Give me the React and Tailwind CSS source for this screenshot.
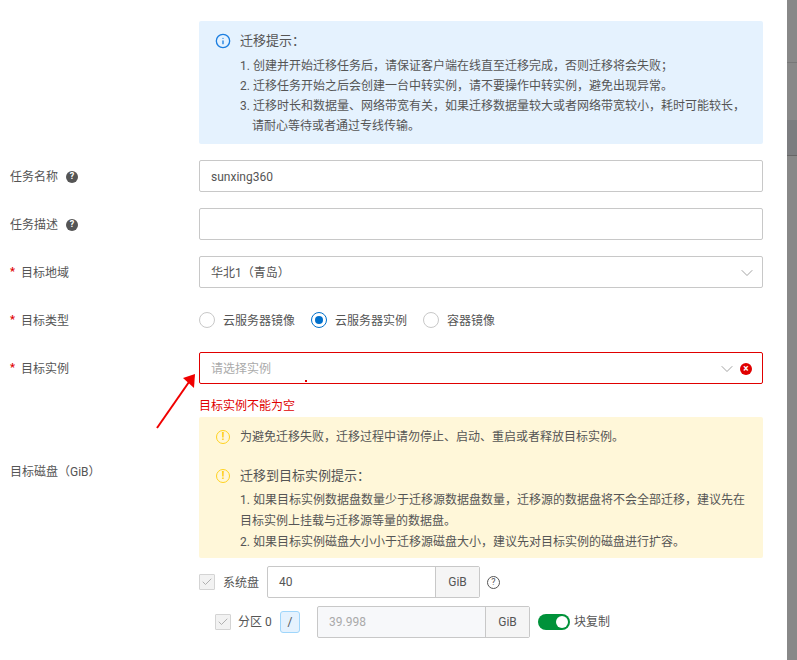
import React from "react";
import { ChevronDown, Check, Info } from "lucide-react";

const fontStack = "font-['Roboto','Noto_Sans_CJK_SC',sans-serif]";

const HelpDot = () => (
  <span className="ml-[8px] flex h-[12px] w-[12px] items-center justify-center rounded-full bg-[#555] text-[9px] font-bold leading-none text-white">
    ?
  </span>
);

const Label = ({ required, help, children }) => (
  <div className="flex h-[32px] w-[199px] shrink-0 items-center pl-[10px] pt-px text-[12px] text-[#555]">
    {required && <span className="mr-[6px] text-[11px] font-bold text-[#e00000]">*</span>}
    <span>{children}</span>
    {help && <HelpDot />}
  </div>
);

const Radio = ({ checked, children }) => (
  <div className="flex items-center">
    <span
      className={`flex h-[16px] w-[16px] items-center justify-center rounded-full border bg-white ${checked ? "border-[#0070cc]" : "border-[#c8c8c8]"}`}
    >
      {checked && <span className="h-[8px] w-[8px] rounded-full bg-[#0070cc]" />}
    </span>
    <span className="ml-[8px] pt-px text-[12px] text-[#555]">{children}</span>
  </div>
);

const AlertIcon = () => (
  <span className="flex h-[14px] w-[14px] shrink-0 items-center justify-center rounded-full border-[1.5px] border-[#ffd21e] text-[10px] font-bold leading-none text-[#ffc800]">
    !
  </span>
);

const CheckBox = () => (
  <span className="flex h-[16px] w-[16px] shrink-0 items-center justify-center rounded-[1px] border border-[#d4d4d4] bg-[#f2f2f2]">
    <Check size={12} strokeWidth={2} className="text-[#b0b0b0]" />
  </span>
);

const GibInput = ({ value, disabled }) => (
  <div
    className={`flex h-[32px] w-[213px] rounded-[2px] border border-[#c8c8c8] text-[12px] ${disabled ? "bg-[#f7f8fa] text-[#aaa]" : "bg-white text-[#555]"}`}
  >
    <div className="flex flex-1 items-center pl-[11px]">{value}</div>
    <div className="flex w-[44px] items-center justify-center border-l border-[#c8c8c8] bg-[#f5f5f5] text-[#555]">
      GiB
    </div>
  </div>
);

export default function App() {
  return (
    <div className={`relative flex h-[660px] w-[797px] overflow-hidden bg-white ${fontStack}`}>
      <div className="flex min-w-0 flex-1 flex-col pr-[24px] pt-[21px]">
        <div className="ml-[199px] h-[123px] rounded-[2px] bg-[#e5f2fe] pl-[16px] pt-[11px]">
          <div className="flex h-[17px] items-center text-[13px] text-[#555]">
            <Info size={16} strokeWidth={2} className="mr-[9px] text-[#1b7ee0]" />
            迁移提示：
          </div>
          <ol className="ml-[25px] mt-[7px] text-[12px] leading-[20px] text-[#555]">
            <li>1. 创建并开始迁移任务后，请保证客户端在线直至迁移完成，否则迁移将会失败；</li>
            <li>2. 迁移任务开始之后会创建一台中转实例，请不要操作中转实例，避免出现异常。</li>
            <li>3. 迁移时长和数据量、网络带宽有关，如果迁移数据量较大或者网络带宽较小，耗时可能较长，</li>
            <li className="pl-[12px]">请耐心等待或者通过专线传输。</li>
          </ol>
        </div>

        <div className="mt-[16px] flex">
          <Label help>任务名称</Label>
          <div className="flex h-[32px] flex-1 items-center rounded-[2px] border border-[#c8c8c8] pl-[11px] pt-px text-[12px] text-[#555]">
            sunxing360
          </div>
        </div>

        <div className="mt-[16px] flex">
          <Label help>任务描述</Label>
          <div className="h-[32px] flex-1 rounded-[2px] border border-[#c8c8c8]" />
        </div>

        <div className="mt-[16px] flex">
          <Label required>目标地域</Label>
          <div className="flex h-[32px] flex-1 items-center justify-between rounded-[2px] border border-[#c8c8c8] pl-[11px] pr-[5px] pt-px text-[12px] text-[#555]">
            华北1（青岛）
            <ChevronDown size={20} strokeWidth={1.1} className="text-[#999]" />
          </div>
        </div>

        <div className="mt-[16px] flex">
          <Label required>目标类型</Label>
          <div className="flex h-[32px] flex-1 items-center gap-[16px]">
            <Radio>云服务器镜像</Radio>
            <Radio checked>云服务器实例</Radio>
            <Radio>容器镜像</Radio>
          </div>
        </div>

        <div className="mt-[16px] flex">
          <Label required>目标实例</Label>
          <div className="flex h-[32px] flex-1 items-center rounded-[2px] border border-[#e00000] pl-[11px] pr-[10px] pt-px text-[12px] text-[#aaa]">
            <span className="flex-1">请选择实例</span>
            <ChevronDown size={20} strokeWidth={1.1} className="mr-[3px] text-[#999]" />
            <span className="flex h-[12px] w-[12px] items-center justify-center rounded-full bg-[#e00000] text-[10px] font-bold leading-none text-white">
              ×
            </span>
          </div>
        </div>

        <div className="flex">
          <div className="w-[199px] shrink-0 pl-[10px] pt-[80px] text-[12px] leading-[16px] text-[#555]">
            目标磁盘（GiB）
          </div>
          <div className="min-w-0 flex-1">
            <div className="h-[33px] pt-[14px] text-[12px] leading-[17px] text-[#e00000]">目标实例不能为空</div>
            <div className="h-[141px] rounded-[2px] bg-[#fff7d9] pl-[17px] pt-[11px] text-[12px] text-[#555]">
              <div className="flex h-[17px] items-center gap-[10px]">
                <AlertIcon />
                为避免迁移失败，迁移过程中请勿停止、启动、重启或者释放目标实例。
              </div>
              <div className="mt-[22px] flex h-[17px] items-center gap-[10px] text-[13px]">
                <AlertIcon />
                迁移到目标实例提示：
              </div>
              <div className="ml-[24px] mt-[6px] leading-[21px]">
                <p>1. 如果目标实例数据盘数量少于迁移源数据盘数量，迁移源的数据盘将不会全部迁移，建议先在</p>
                <p>目标实例上挂载与迁移源等量的数据盘。</p>
                <p>2. 如果目标实例磁盘大小小于迁移源磁盘大小，建议先对目标实例的磁盘进行扩容。</p>
              </div>
            </div>

            <div className="mt-[8px] flex h-[32px] items-center text-[12px] text-[#555]">
              <CheckBox />
              <span className="ml-[8px] w-[44px] pt-px">系统盘</span>
              <GibInput value="40" />
              <span className="ml-[7px] flex h-[13px] w-[13px] items-center justify-center rounded-full border border-[#555] text-[9px] leading-none">
                ?
              </span>
            </div>

            <div className="mt-[8px] flex h-[32px] items-center pl-[16px] text-[12px] text-[#555]">
              <CheckBox />
              <span className="ml-[7px] w-[42px]">分区 0</span>
              <span className="flex h-[22px] w-[20px] items-center justify-center rounded-[3px] border border-[#9fd6fb] bg-[#e5f2fe]">
                /
              </span>
              <span className="ml-[17px]">
                <GibInput value="39.998" disabled />
              </span>
              <span className="ml-[8px] flex h-[16px] w-[32px] items-center justify-end rounded-full bg-[#00923a] pr-[2px]">
                <span className="h-[12px] w-[12px] rounded-full bg-white" />
              </span>
              <span className="ml-[4px]">块复制</span>
            </div>
          </div>
        </div>
      </div>

      <div className="flex w-[10px] shrink-0 flex-col bg-[#888]">
        <div className="h-[63px] border-b border-[#777]" />
        <div className="mt-[57px] h-[36px] border-b border-[#666] bg-[#7c7d80]" />
      </div>

      <svg className="pointer-events-none absolute left-0 top-0" width="797" height="660">
        <line x1="157" y1="428" x2="189" y2="382" stroke="#f00000" strokeWidth="2" />
        <polygon points="195,374 183,378 194,388" fill="#f00000" />
        <rect x="305" y="380" width="2" height="2" fill="#e00000" />
      </svg>
    </div>
  );
}
